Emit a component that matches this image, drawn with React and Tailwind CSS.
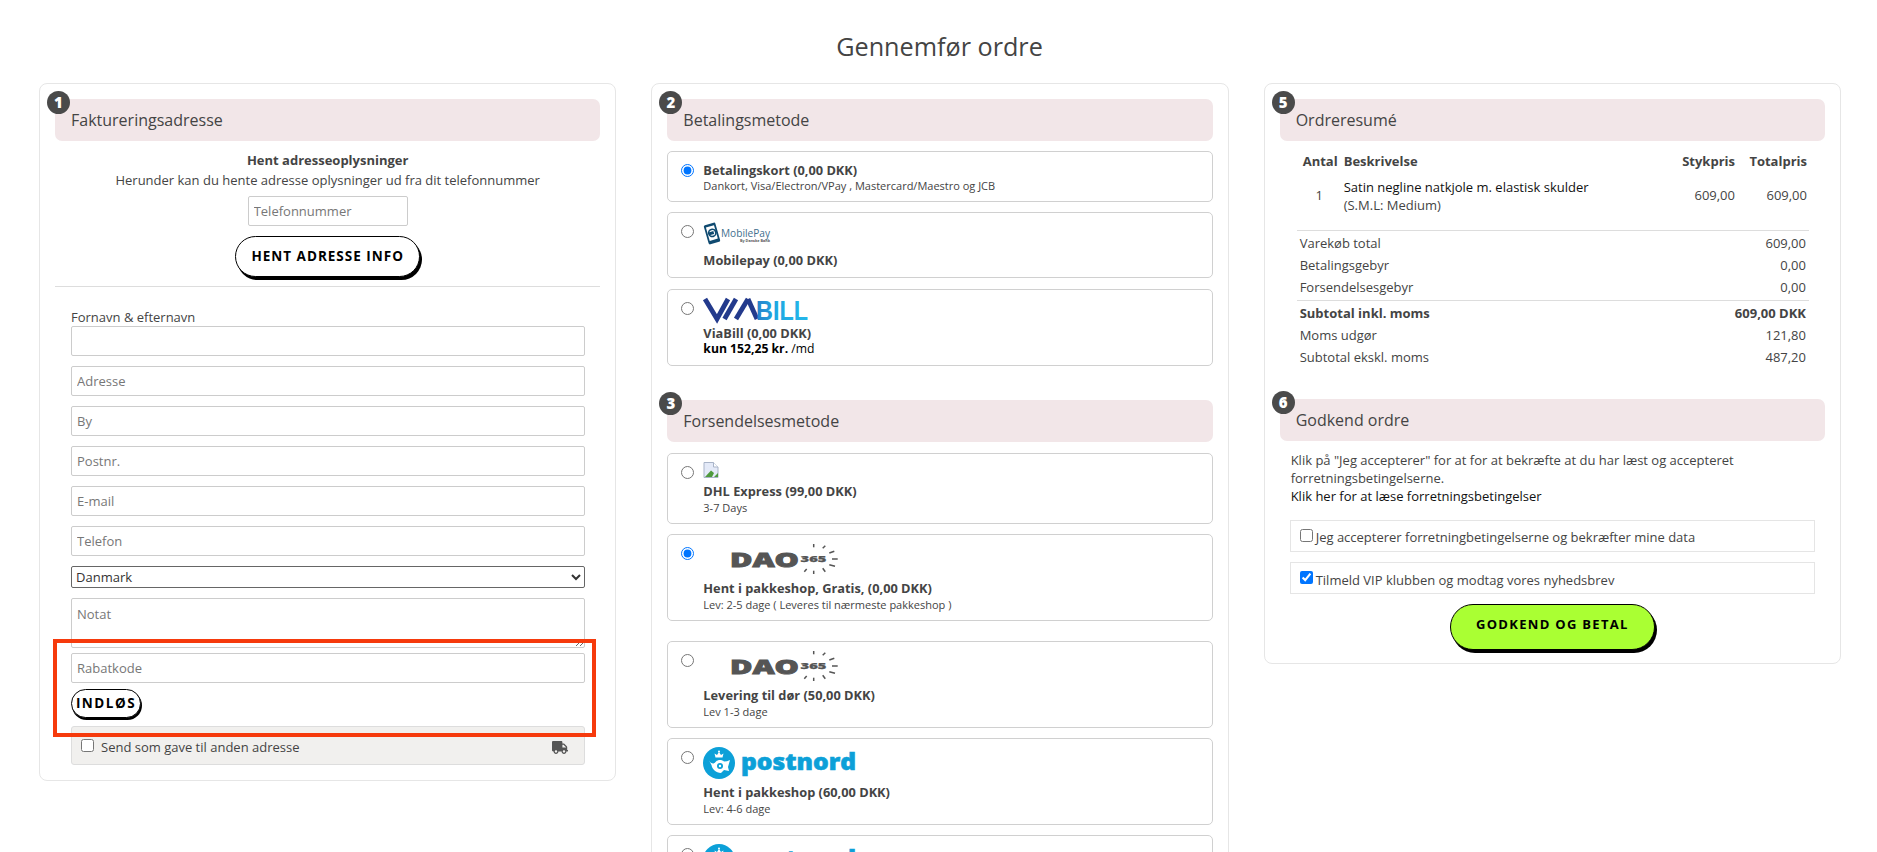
import React from "react";
import { FaTruck } from "react-icons/fa";

function Header({ n, title, className = "" }) {
  return (
    <div className={`relative h-[42px] rounded-[7px] bg-[#f2e6e8] pl-[16px] flex items-center text-[16px] text-[#444] ${className}`}>
      <span className="absolute left-[-8px] top-[-8px] w-[23px] h-[23px] rounded-full bg-[#4a4a4a] text-white text-[15px] font-extrabold flex items-center justify-center">{n}</span>
      <span>{title}</span>
    </div>
  );
}

function Field({ placeholder, className = "" }) {
  return (
    <input
      placeholder={placeholder}
      className={`block w-full h-[30px] border border-[#ccc] rounded-[2px] px-[5px] text-[13px] text-[#444] placeholder:text-[#777] bg-white ${className}`}
    />
  );
}

function Option({ checked, name, className = "", children }) {
  return (
    <div className={`flex border border-[#d0d0d0] rounded-[5px] pl-[13px] bg-white ${className}`}>
      <input type="radio" name={name} defaultChecked={checked} className="w-[13px] h-[13px] m-0 shrink-0" />
      <div className="ml-[9px] min-w-0 flex-1">{children}</div>
    </div>
  );
}

const Bold = ({ children, className = "" }) => (
  <div className={`text-[12.8px] leading-[16px] font-bold text-[#444] ${className}`}>{children}</div>
);
const Sub = ({ children }) => (
  <div className="text-[11px] leading-[16px] text-[#444]">{children}</div>
);

function MobileLogo() {
  return (
    <svg width="70" height="21" viewBox="0 0 70 21" className="block overflow-visible">
      <g transform="rotate(-16 9 10.5)">
        <rect x="3" y="0.5" width="12" height="20" rx="1.5" fill="#0f4a70" />
        <rect x="4.8" y="3" width="8.4" height="14" fill="#fff" />
        <circle cx="9.4" cy="10" r="3.6" fill="none" stroke="#0f4a70" strokeWidth="1.6" />
        <rect x="6" y="8.5" width="5" height="3" fill="#0f4a70" />
      </g>
      <text x="18" y="13.5" fontFamily="Open Sans, sans-serif" fontSize="11" textLength="49" lengthAdjust="spacingAndGlyphs" fill="#3f6f8e">MobilePay</text>
      <text x="37" y="18.5" fontFamily="Open Sans, sans-serif" fontSize="3.6" fontWeight="700" textLength="30" lengthAdjust="spacingAndGlyphs" fill="#555">By Danske Bank</text>
    </svg>
  );
}

function ViaLogo() {
  return (
    <svg width="106" height="23" viewBox="0 0 106 23" className="block overflow-visible">
      <defs>
        <linearGradient id="billg" x1="0" y1="0" x2="1" y2="0">
          <stop offset="0" stopColor="#2a7fc8" />
          <stop offset="0.35" stopColor="#1ea7e1" />
          <stop offset="1" stopColor="#25b7ea" />
        </linearGradient>
      </defs>
      <g fill="none" stroke="#233a8c" strokeWidth="4.8">
        <path d="M2 1 L14 21 L25 1" />
        <path d="M33 1 L21.5 21" />
        <path d="M45 1 L33 21" />
        <path d="M45 1 L54 21" />
      </g>
      <text x="53" y="21.5" fontFamily="Liberation Sans, sans-serif" fontSize="28" fontWeight="700" textLength="52" lengthAdjust="spacingAndGlyphs" fill="url(#billg)">BILL</text>
    </svg>
  );
}

function DaoLogo() {
  const rays = [
    [82.7, 0, 82.7, 3.3], [94.3, 1.7, 91.7, 4.3], [103.3, 7.3, 98.3, 9], [106.7, 15, 101, 15],
    [104, 22.3, 98.3, 20.7], [94.3, 27.7, 91.7, 24.3], [82.7, 30, 82.7, 26.7], [73.3, 27.7, 75.7, 25],
  ];
  return (
    <svg width="108" height="31" viewBox="0 0 108 31" className="block overflow-visible">
      <text x="-1" y="23.3" fontFamily="Open Sans, sans-serif" fontSize="18.5" fontWeight="800" stroke="#555" strokeWidth="0.8" textLength="69" lengthAdjust="spacingAndGlyphs" fill="#555">DAO</text>
      <text x="69.5" y="18.3" fontFamily="Open Sans, sans-serif" fontSize="9.3" fontWeight="800" stroke="#555" strokeWidth="0.25" textLength="26" lengthAdjust="spacingAndGlyphs" fill="#555">365</text>
      <g stroke="#555" strokeWidth="1.5">
        {rays.map((r, i) => <line key={i} x1={r[0]} y1={r[1]} x2={r[2]} y2={r[3]} />)}
      </g>
    </svg>
  );
}

function PostLogo() {
  return (
    <svg width="154" height="32" viewBox="0 0 154 32" className="block overflow-visible">
      <circle cx="16" cy="16" r="16" fill="#0ca0d8" />
      {/* crown */}
      <path d="M12.5 10.5 L11.5 6.5 L14 8 L16 5 L18 8 L20.5 6.5 L19.5 10.5 Z" fill="#fff" />
      <circle cx="16" cy="4.6" r="1" fill="#fff" />
      {/* horn */}
      <path d="M6 13.5 C8 17 11 17.5 13 14.5 C15 12.5 19 12.5 21 14.5 C23 14.5 25 14 27 13 L25 20 L26 24 L21 23 L18 26 C13 26 9 22 8.5 18 Z" fill="#fff" />
      <circle cx="17" cy="19" r="3" fill="#0ca0d8" />
      <circle cx="17" cy="19" r="1.2" fill="#fff" />
      <text x="38" y="22.5" fontFamily="Open Sans, sans-serif" fontSize="23" fontWeight="800" stroke="#0ca0d8" strokeWidth="0.6" textLength="115" lengthAdjust="spacingAndGlyphs" fill="#0ca0d8">postnord</text>
    </svg>
  );
}

function BrokenImage() {
  return (
    <svg width="16" height="16" viewBox="0 0 16 16" className="block">
      <path d="M1 0.5 H10.5 L15 5 V15.5 H1 Z" fill="#e4eaf8" stroke="#a9b4c8" strokeWidth="1" />
      <path d="M10.5 0.5 V5 H15" fill="#fff" stroke="#a9b4c8" />
      <path d="M2 15 L8 8.5 L11 11 L9 15 Z" fill="#4f9a3e" />
      <path d="M11 15 L15 11 V15 Z" fill="#4f9a3e" />
    </svg>
  );
}

function Row({ label, value, bold }) {
  return (
    <div className={`flex justify-between h-[22px] items-center pl-[3px] pr-[2px] text-[13px] ${bold ? "font-bold" : ""}`}>
      <span>{label}</span>
      <span>{value}</span>
    </div>
  );
}

export default function App() {
  return (
    <div className="h-[852px] overflow-hidden bg-white font-['Open_Sans',sans-serif] text-[#444] relative">
      <h1 className="h-[83px] pt-[27px] pl-[2px] text-center text-[25.2px] leading-[38px] font-normal text-[#444]">Gennemfør ordre</h1>
      <div className="grid grid-cols-3 gap-[35px] pl-[39px] pr-[36px] items-start">
        {/* Column 1 */}
        <section className="border border-[#e6e6e6] rounded-[8px] h-[698px] pt-[15px] px-[15px]">
          <Header n="1" title="Faktureringsadresse" />
          <div className="text-center text-[13px]">
            <div className="font-bold leading-[20px] mt-[9px]">Hent adresseoplysninger</div>
            <div className="leading-[20px]">Herunder kan du hente adresse oplysninger ud fra dit telefonnummer</div>
            <div className="flex justify-center mt-[6px]">
              <input placeholder="Telefonnummer" className="w-[160px] h-[30px] border border-[#ccc] rounded-[2px] px-[5px] text-[13px] placeholder:text-[#777]" />
            </div>
            <div className="flex justify-center mt-[10px]">
              <button className="w-[185px] h-[41px] rounded-full border border-black bg-white shadow-[2px_3px_0_#000] text-[13.5px] font-bold tracking-[1px] text-black">HENT ADRESSE INFO</button>
            </div>
          </div>
          <div className="h-px bg-[#ddd] mt-[9px]" />
          <div className="pl-[16px] pr-[15px]">
            <div className="text-[13px] leading-[18px] mt-[21px]">Fornavn &amp; efternavn</div>
            <Field />
            <Field placeholder="Adresse" className="mt-[10px]" />
            <Field placeholder="By" className="mt-[10px]" />
            <Field placeholder="Postnr." className="mt-[10px]" />
            <Field placeholder="E-mail" className="mt-[10px]" />
            <Field placeholder="Telefon" className="mt-[10px]" />
            <select className="block w-full h-[22px] mt-[10px] border border-[#666] rounded-[2px] bg-white text-[13px] text-[#333]">
              <option>Danmark</option>
            </select>
            <textarea placeholder="Notat" className="block w-full h-[50px] mt-[10px] border border-[#ccc] rounded-[2px] px-[5px] pt-[6px] text-[13px] placeholder:text-[#777]" />
            <Field placeholder="Rabatkode" className="mt-[5px]" />
            <button className="block mt-[6px] w-[70px] h-[29px] rounded-full border border-black bg-white shadow-[1px_2px_0_#000] text-[13.5px] font-bold tracking-[1.5px] text-black">INDLØS</button>
            <div className="mt-[8px] h-[39px] rounded-[3px] border border-[#ddd] bg-[#f1f0ee] flex items-start pl-[9px] pr-[16px] pt-[12px]">
              <input type="checkbox" className="w-[13px] h-[13px] m-0 shrink-0" />
              <span className="ml-[7px] text-[13px] leading-[18px] flex-1 -mt-[1px]">Send som gave til anden adresse</span>
              <FaTruck className="w-[16px] h-[13px] text-[#555] mt-[2px]" />
            </div>
          </div>
        </section>

        {/* Column 2 */}
        <section className="border border-[#e6e6e6] rounded-[8px] pt-[15px] px-[15px] pb-[20px]">
          <Header n="2" title="Betalingsmetode" />
          <Option checked name="pay" className="mt-[10px] h-[51px] pt-[12px]">
            <div className="-mt-[2px]"><Bold>Betalingskort (0,00 DKK)</Bold><Sub>Dankort, Visa/Electron/VPay , Mastercard/Maestro og JCB</Sub></div>
          </Option>
          <Option name="pay" className="mt-[10px] h-[66px] pt-[12px]">
            <div className="-mt-[2px]"><MobileLogo /><Bold className="mt-[8px]">Mobilepay (0,00 DKK)</Bold></div>
          </Option>
          <Option name="pay" className="mt-[11px] h-[77px] pt-[12px]">
            <div className="-mt-[4px]"><ViaLogo /><Bold className="mt-[4px]">ViaBill (0,00 DKK)</Bold>
              <div className="text-[12.2px] leading-[16px] text-black"><b>kun 152,25 kr.</b> /md</div></div>
          </Option>

          <Header n="3" title="Forsendelsesmetode" className="mt-[34px]" />
          <Option name="ship" className="mt-[11px] h-[71px] pt-[12px]">
            <div className="-mt-[4px]"><BrokenImage /><Bold className="mt-[5px] mb-[1px]">DHL Express (99,00 DKK)</Bold><Sub>3-7 Days</Sub></div>
          </Option>
          <Option checked name="ship" className="mt-[10px] h-[87px] pt-[12px]">
            <div className="-mt-[3px]"><div className="ml-[28px]"><DaoLogo /></div><Bold className="mt-[5px] mb-[1px]">Hent i pakkeshop, Gratis, (0,00 DKK)</Bold><Sub>Lev: 2-5 dage ( Leveres til nærmeste pakkeshop )</Sub></div>
          </Option>
          <Option name="ship" className="mt-[20px] h-[87px] pt-[12px]">
            <div className="-mt-[3px]"><div className="ml-[28px]"><DaoLogo /></div><Bold className="mt-[5px] mb-[1px]">Levering til dør (50,00 DKK)</Bold><Sub>Lev 1-3 dage</Sub></div>
          </Option>
          <Option name="ship" className="mt-[10px] h-[87px] pt-[12px]">
            <div className="-mt-[4px]"><PostLogo /><Bold className="mt-[5px] mb-[1px]">Hent i pakkeshop (60,00 DKK)</Bold><Sub>Lev: 4-6 dage</Sub></div>
          </Option>
          <Option name="ship" className="mt-[10px] h-[87px] pt-[12px]">
            <div className="-mt-[4px]"><PostLogo /></div>
          </Option>
        </section>

        {/* Column 3 */}
        <section className="border border-[#e6e6e6] rounded-[8px] h-[581px] pt-[15px] px-[15px]">
          <Header n="5" title="Ordreresumé" />
          <div className="mt-[11px] text-[13px] px-[17px]">
            <div className="flex font-bold h-[20px] items-center">
              <span className="w-[47px] pl-[6px]">Antal</span>
              <span className="flex-1">Beskrivelse</span>
              <span className="w-[70px] text-right">Stykpris</span>
              <span className="w-[73px] text-right pr-[1px]">Totalpris</span>
            </div>
            <div className="flex items-center mt-[4px] h-[40px]">
              <span className="w-[47px] text-center pr-[2px]">1</span>
              <div className="flex-1 leading-[18px]"><div className="text-[#111]">Satin negline natkjole m. elastisk skulder</div><div>(S.M.L: Medium)</div></div>
              <span className="w-[70px] text-right">609,00</span>
              <span className="w-[73px] text-right pr-[1px]">609,00</span>
            </div>
            <div className="h-px bg-[#ddd] mt-[14px] -mr-[1px]" />
            <div className="mt-[2px]">
              <Row label="Varekøb total" value="609,00" />
              <Row label="Betalingsgebyr" value="0,00" />
              <Row label="Forsendelsesgebyr" value="0,00" />
            </div>
            <div className="h-px bg-[#ddd] mt-[1px] -mr-[1px]" />
            <div className="mt-[2px]">
              <Row bold label="Subtotal inkl. moms" value="609,00 DKK" />
              <Row label="Moms udgør" value="121,80" />
              <Row label="Subtotal ekskl. moms" value="487,20" />
            </div>
          </div>
          <Header n="6" title="Godkend ordre" className="mt-[30px]" />
          <div className="px-[10px] text-[13px]">
            <div className="mt-[10px] pl-[1px] leading-[18px] w-[480px]">Klik på "Jeg accepterer" for at for at bekræfte at du har læst og accepteret forretningsbetingelserne.<div className="text-[#111]">Klik her for at læse forretningsbetingelser</div></div>
            <div className="mt-[15px] h-[32px] border border-[#e5e5e5] flex pl-[9px] pt-[8px] w-[525px]">
              <input type="checkbox" className="w-[13px] h-[13px] m-0 shrink-0" />
              <span className="ml-[3px] leading-[16px]">Jeg accepterer forretningbetingelserne og bekræfter mine data</span>
            </div>
            <div className="mt-[10px] h-[32px] border border-[#e5e5e5] flex pl-[9px] pt-[8px] w-[525px]">
              <input type="checkbox" defaultChecked className="w-[13px] h-[13px] m-0 shrink-0" />
              <span className="ml-[3px] leading-[18px]">Tilmeld VIP klubben og modtag vores nyhedsbrev</span>
            </div>
            <div className="flex justify-center mt-[10px]">
              <button className="w-[205px] h-[46px] rounded-full border border-black bg-[#aaff33] shadow-[2px_3px_0_#000] text-[13px] font-bold tracking-[1.3px] text-black pb-[4px]">GODKEND OG BETAL</button>
            </div>
          </div>
        </section>
      </div>

      {/* Annotation */}
      <div className="absolute left-[53px] top-[639px] w-[543px] h-[98px] border-[4px] border-[#f63a0c] pointer-events-none" />
    </div>
  );
}
